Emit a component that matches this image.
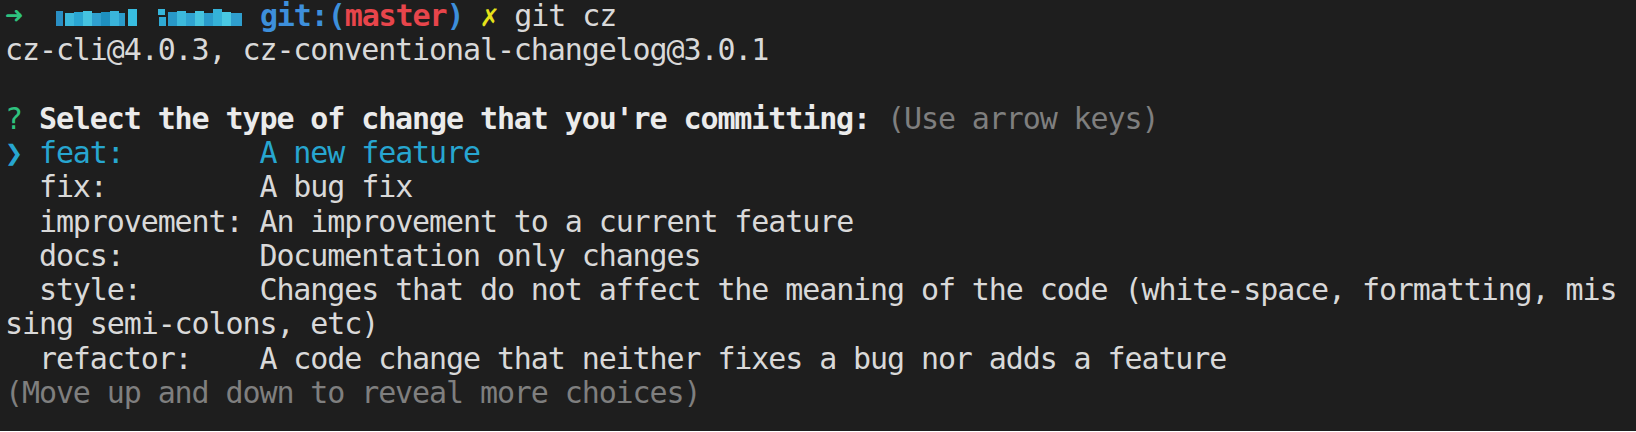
import React from "react";

type Choice = { name: string; desc: string; wrap?: string };

const choices: Choice[] = [
  { name: "feat:", desc: "A new feature" },
  { name: "fix:", desc: "A bug fix" },
  { name: "improvement:", desc: "An improvement to a current feature" },
  { name: "docs:", desc: "Documentation only changes" },
  {
    name: "style:",
    desc: "Changes that do not affect the meaning of the code (white-space, formatting, mis",
    wrap: "sing semi-colons, etc)",
  },
  { name: "refactor:", desc: "A code change that neither fixes a bug nor adds a feature" },
];

// pixelated hostname/folder, drawn as a mosaic
const tiles: [number, number, number, number, string][] = [
  [0, 2, 7, 15, "#2a8fc4"],
  [9, 4, 9, 13, "#3bb8dc"],
  [18, 3, 9, 14, "#2aa6d2"],
  [27, 2, 9, 15, "#45c3e0"],
  [36, 4, 9, 13, "#2fa0cf"],
  [45, 3, 9, 14, "#1e90c0"],
  [54, 2, 9, 15, "#3ab4da"],
  [63, 4, 6, 13, "#2b9ccb"],
  [72, 0, 9, 17, "#38bde0"],
  [102, 0, 7, 6, "#36b5da"],
  [103, 8, 7, 9, "#2fa9d4"],
  [112, 3, 9, 14, "#2898c8"],
  [121, 2, 9, 15, "#3cb9dc"],
  [130, 4, 9, 13, "#2fa3d0"],
  [139, 2, 9, 15, "#46c4df"],
  [148, 4, 9, 13, "#2a9ccc"],
  [157, 0, 9, 17, "#35b2d8"],
  [166, 3, 9, 14, "#49c8e2"],
  [175, 4, 11, 13, "#2f9fce"],
];

function Mosaic() {
  return (
    <svg width="187" height="17" viewBox="0 0 187 17" className="inline-block">
      {tiles.map(([x, y, w, h, c], i) => (
        <rect key={i} x={x} y={y} width={w} height={h} fill={c} />
      ))}
    </svg>
  );
}

function Line({ children }: { children?: React.ReactNode }) {
  return <div className="h-[34.25px] whitespace-pre">{children ?? " "}</div>;
}

export default function App() {
  return (
    <div
      className="w-[1636px] h-[432px] overflow-hidden bg-[#1e1e1e] text-[#d9d9d9] pl-[5px] -mt-px text-[30px] leading-[34.25px] tracking-[-1.1px]"
      style={{ fontFamily: '"DejaVu Sans Mono", "Liberation Mono", monospace' }}
    >
      <Line>
        <span className="text-[#2ec27e]">➜</span>
        {"  "}
        <Mosaic />
        {" "}
        <span className="font-bold text-[#3d8fdb]">git:(</span>
        <span className="font-bold text-[#e8454b]">master</span>
        <span className="font-bold text-[#3d8fdb]">)</span>
        {" "}
        <span className="text-[#e6e21a]">✗</span>
        {" git cz"}
      </Line>
      <Line>cz-cli@4.0.3, cz-conventional-changelog@3.0.1</Line>
      <Line />
      <Line>
        <span className="text-[#2ec27e]">?</span>
        <span className="font-bold text-[#ebebeb]"> Select the type of change that you're committing:</span>
        <span className="text-[#7f7f7f]"> (Use arrow keys)</span>
      </Line>
      {choices.map((c, i) => (
        <React.Fragment key={c.name}>
          <Line>
            {i === 0 ? (
              <span className="text-[#27a6d0]">
                <span className="font-bold">❯</span> {c.name.padEnd(13)}
                {c.desc}
              </span>
            ) : (
              <>
                {"  " + c.name.padEnd(13)}
                {c.desc}
              </>
            )}
          </Line>
          {c.wrap && <Line>{c.wrap}</Line>}
        </React.Fragment>
      ))}
      <Line>
        <span className="text-[#7f7f7f]">(Move up and down to reveal more choices)</span>
      </Line>
    </div>
  );
}
